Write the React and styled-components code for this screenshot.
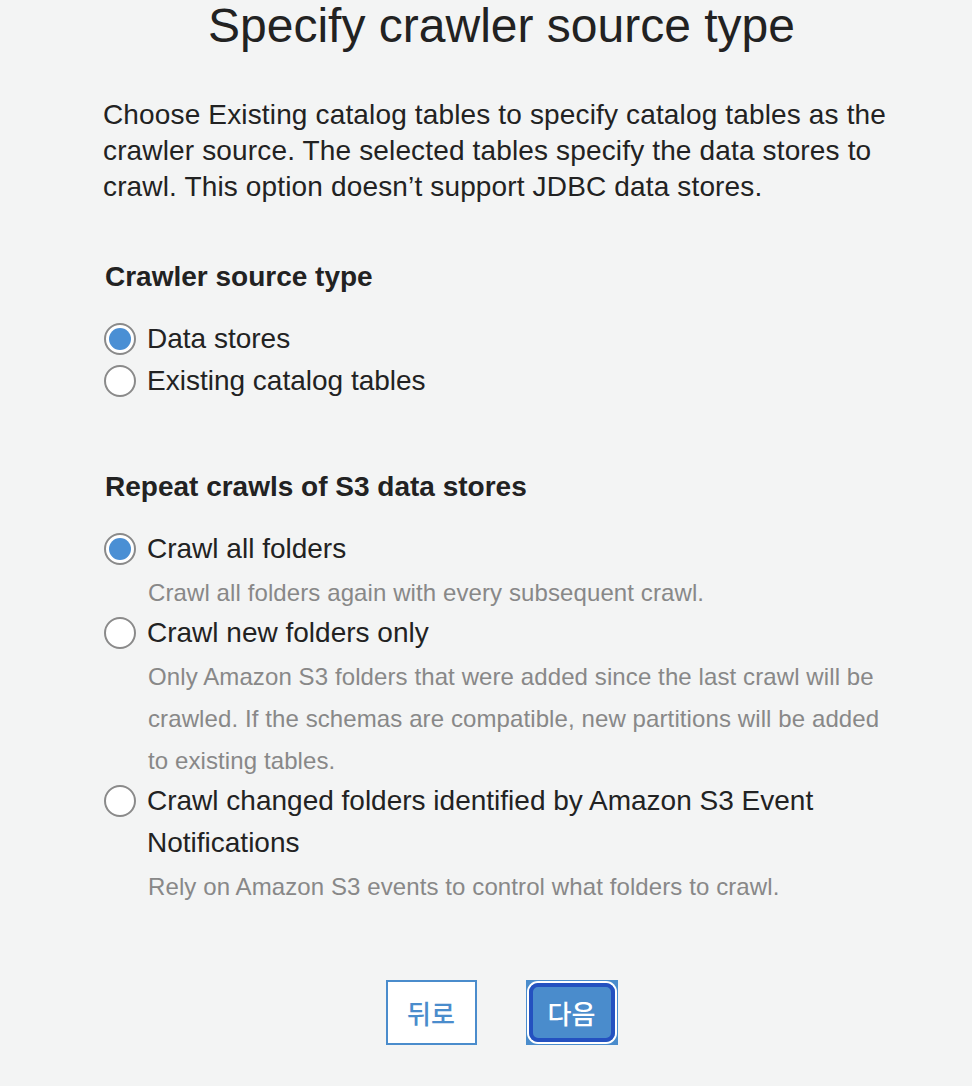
import styled, { createGlobalStyle } from "styled-components";

const GlobalStyle = createGlobalStyle`
  body {
    margin: 0;
    background: #f3f4f4;
    font-family: "Liberation Sans", Arial, "Noto Sans CJK KR", sans-serif;
    color: #222;
  }
`;

const Page = styled.div`
  width: 797px;
  padding: 2px 0 40px 103px;
`;

const Title = styled.h1`
  margin: 0;
  font-size: 48px;
  line-height: 48px;
  font-weight: 400;
  text-align: center;
`;

const Intro = styled.p`
  margin: 47px 0 0;
  font-size: 28px;
  line-height: 36px;
  letter-spacing: 0.15px;
`;

const Section = styled.section`
  margin-top: ${(p) => p.$top}px;
`;

const Heading = styled.h2`
  margin: 0 0 23px 2px;
  font-size: 28px;
  line-height: 36px;
  font-weight: 700;
`;

const Option = styled.label`
  display: flex;
  align-items: flex-start;
  gap: 11px;
  padding-left: 1px;
  font-size: 28px;
  line-height: 42px;
  cursor: pointer;
`;

const Radio = styled.span`
  flex: none;
  box-sizing: border-box;
  width: 32px;
  height: 32px;
  margin-top: 5px;
  border-radius: 50%;
  border: 2px solid #8a8a8a;
  background: #fff;
  display: flex;
  align-items: center;
  justify-content: center;

  &::after {
    content: "";
    width: 22px;
    height: 22px;
    border-radius: 50%;
    background: ${(p) => (p.$checked ? "#4a8fd4" : "transparent")};
  }
`;

const Desc = styled.div`
  padding: 2px 10px 0 45px;
  margin-bottom: -2px;
  font-size: 24px;
  line-height: 42px;
  letter-spacing: 0.1px;
  color: #888;
`;

const Actions = styled.div`
  display: flex;
  justify-content: center;
  gap: 49px;
  margin-top: 74px;
`;

const BackButton = styled.button`
  box-sizing: border-box;
  width: 91px;
  height: 65px;
  background: #fff;
  border: 2px solid #4a8ccc;
  color: #4a8ccc;
  font-family: "Noto Sans CJK KR", sans-serif;
  font-size: 26px;
  font-weight: 500;
  cursor: pointer;
`;

const NextButton = styled.button`
  box-sizing: border-box;
  width: 92px;
  height: 65px;
  padding: 3px;
  background: #4a8ccc;
  border: none;
  cursor: pointer;
`;

const NextInner = styled.span`
  box-sizing: border-box;
  display: flex;
  align-items: center;
  justify-content: center;
  width: 100%;
  height: 100%;
  border-radius: 9px;
  border: 4px solid #2451c0;
  box-shadow: 0 0 0 2px #fff;
  color: #fff;
  font-family: "Noto Sans CJK KR", sans-serif;
  font-size: 26px;
  font-weight: 500;
`;

const sourceTypes = [
  { label: "Data stores", checked: true },
  { label: "Existing catalog tables" },
];

const repeatOptions = [
  {
    label: "Crawl all folders",
    desc: "Crawl all folders again with every subsequent crawl.",
    checked: true,
  },
  {
    label: "Crawl new folders only",
    desc: "Only Amazon S3 folders that were added since the last crawl will be crawled. If the schemas are compatible, new partitions will be added to existing tables.",
  },
  {
    label: "Crawl changed folders identified by Amazon S3 Event Notifications",
    desc: "Rely on Amazon S3 events to control what folders to crawl.",
  },
];

const App = () => {
  return (
    <>
      <GlobalStyle />
      <Page>
        <Title>Specify crawler source type</Title>
        <Intro>
          Choose Existing catalog tables to specify catalog tables as the
          crawler source. The selected tables specify the data stores to
          crawl. This option doesn’t support JDBC data stores.
        </Intro>

        <Section $top={54}>
          <Heading>Crawler source type</Heading>
          {sourceTypes.map((o) => (
            <Option key={o.label}>
              <Radio $checked={o.checked} />
              {o.label}
            </Option>
          ))}
        </Section>

        <Section $top={67}>
          <Heading>Repeat crawls of S3 data stores</Heading>
          {repeatOptions.map((o) => (
            <div key={o.label}>
              <Option>
                <Radio $checked={o.checked} />
                <span>{o.label}</span>
              </Option>
              <Desc>{o.desc}</Desc>
            </div>
          ))}
        </Section>

        <Actions>
          <BackButton>뒤로</BackButton>
          <NextButton>
            <NextInner>다음</NextInner>
          </NextButton>
        </Actions>
      </Page>
    </>
  );
};

export default App;
